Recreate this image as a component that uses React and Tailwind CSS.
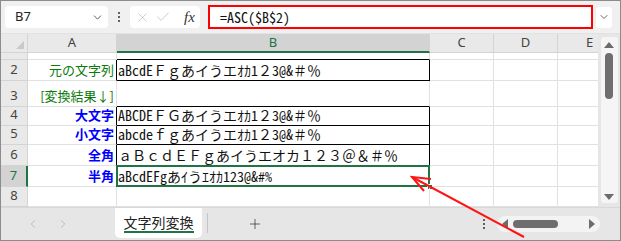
import React from 'react';
import { ChevronDown, X, Check, ChevronLeft, ChevronRight, Plus } from 'lucide-react';

const cellFont = "font-['Noto_Sans_Mono_CJK_JP','Noto_Sans_CJK_JP',monospace]";
const labelFont = "font-['Noto_Sans_CJK_JP',sans-serif]";
const uiFont = "font-['Noto_Sans','Noto_Sans_CJK_JP',sans-serif]";

const colHeads = ['A', 'B', 'C', 'D', 'E'];

const rows = [
  { n: '1', h: 'h-[7px]', topOfBox: true },
  { n: '2', a: '元の文字列', aCls: 'text-[#0b7a0b]', b: 'aBcdEＦｇあイうエｵｶ1２3@&＃％', boxed: true },
  { n: '3', a: '[変換結果↓]', aCls: 'text-[#0b7a0b]', topOfBox: true },
  { n: '4', a: '大文字', aCls: 'text-[#0000ff] font-bold', b: 'ABCDEＦＧあイうエｵｶ1２3@&＃％', boxed: true },
  { n: '5', a: '小文字', aCls: 'text-[#0000ff] font-bold', b: 'abcdeｆｇあイうエｵｶ1２3@&＃％', boxed: true },
  { n: '6', a: '全角', aCls: 'text-[#0000ff] font-bold', b: 'ａＢｃｄＥＦｇあイうエオカ１２３＠＆＃％', boxed: true },
  { n: '7', a: '半角', aCls: 'text-[#0000ff] font-bold', b: 'aBcdEFgあｲうｴｵｶ123@&#%', selected: true },
  { n: '8' },
];

function TopBar() {
  return (
    <div className="h-[33px] flex items-center bg-[#f0f0f0] border-b border-[#e2e2e2] pl-[4px] pr-[8px]">
      <div className={`w-[103px] h-[22px] bg-white rounded-[4px] flex items-center justify-between pl-[10px] pr-[4px] text-[13px] text-[#222] ${uiFont}`}>
        <span>B7</span>
        <ChevronDown size={13} strokeWidth={1.6} className="text-[#444]" />
      </div>
      <div className="w-[22px] flex flex-col items-center gap-[2px]">
        <span className="w-[2px] h-[2px] bg-[#333] rounded-full" />
        <span className="w-[2px] h-[2px] bg-[#333] rounded-full" />
        <span className="w-[2px] h-[2px] bg-[#333] rounded-full" />
      </div>
      <div className="w-[70px] h-[22px] bg-white rounded-[4px] flex items-center pl-[5px] gap-[5px]">
        <X size={15} strokeWidth={1.1} className="text-[#b8b8b8]" />
        <Check size={16} strokeWidth={1.1} className="text-[#b8b8b8]" />
        <span className="ml-[8px] text-[15px] italic text-[#333] font-['Liberation_Serif',serif] leading-none">fx</span>
      </div>
      <div className={`ml-[8px] w-[385px] h-[24px] bg-white border-2 border-[#ff0000] flex items-center pl-[10px] text-[14px] text-[#111] ${cellFont}`}>
        =ASC($B$2)
      </div>
      <div className="ml-[3px] w-[16px] h-[21px] bg-white rounded-[3px] flex items-center justify-center">
        <ChevronDown size={12} strokeWidth={1.6} className="text-[#444]" />
      </div>
    </div>
  );
}

function Grid() {
  return (
    <div className="w-[597px] overflow-hidden bg-white">
      <div className="grid w-max grid-cols-[27px_89px_313px_64px_64px_64px]">
        {/* header row */}
        <div className="h-[19px] bg-[#e9e9e9] border-r border-b border-[#d4d4d4] relative">
          <div className="absolute right-[3px] bottom-[3px] w-0 h-0 border-l-[8px] border-l-transparent border-b-[8px] border-b-[#c9c9c9]" />
        </div>
        {colHeads.map((c) => (
          <div
            key={c}
            className={`h-[19px] flex items-center justify-center text-[13px] ${uiFont} ${
              c === 'B'
                ? 'bg-[#d3d3d3] text-[#217346] border-b-2 border-[#217346] border-r border-r-[#d4d4d4]'
                : 'bg-[#e9e9e9] text-[#444] border-r border-b border-[#d4d4d4]'
            }`}
          >
            {c}
          </div>
        ))}

        {rows.map((r) => {
          const h = r.h || { '2': 'h-[21px]', '3': 'h-[26px]', '4': 'h-[19px]', '5': 'h-[19px]', '6': 'h-[21px]', '7': 'h-[21px]', '8': 'h-[20px]' }[r.n];
          return (
            <React.Fragment key={r.n}>
              <div
                className={`${h} overflow-hidden flex flex-col justify-end text-[13px] ${uiFont} border-b border-[#d4d4d4] ${
                  r.selected ? 'bg-[#d3d3d3] text-[#217346] border-r-2 border-r-[#217346]' : 'bg-[#e9e9e9] text-[#444] border-r'
                }`}
              >
                <div className="h-[20px] shrink-0 flex items-center justify-center">{r.n}</div>
              </div>
              <div
                className={`${h} overflow-hidden flex items-end justify-end pr-[2px] pb-[1px] whitespace-nowrap text-[13px] leading-[18px] ${labelFont} border-b border-[#e1e1e1] border-r ${
                  r.boxed ? 'border-r-black' : 'border-r-[#e1e1e1]'
                } ${r.aCls || ''}`}
              >
                {r.a}
              </div>
              <div
                className={`${h} relative flex items-end pl-[1px] pb-[1px] whitespace-nowrap text-[14px] leading-[18px] text-[#111] ${cellFont} border-r border-b ${
                  r.boxed ? 'border-black' : r.topOfBox ? 'border-r-[#e1e1e1] border-b-black' : 'border-[#e1e1e1]'
                }`}
              >
                {r.b}
                {r.selected && (
                  <>
                    <div className="absolute -left-[1px] -top-[1px] -right-[1px] -bottom-[1px] border-2 border-[#217346]" />
                    <div className="absolute -right-[4px] -bottom-[4px] w-[6px] h-[6px] bg-[#217346] border border-white" />
                  </>
                )}
              </div>
              <div className={`${h} border-r border-b border-[#e1e1e1]`} />
              <div className={`${h} border-r border-b border-[#e1e1e1]`} />
              <div className={`${h} border-r border-b border-[#e1e1e1]`} />
            </React.Fragment>
          );
        })}
      </div>
    </div>
  );
}

function VScroll() {
  return (
    <div className="w-[22px] bg-[#e6e6e6] flex justify-center pt-[3px]">
      <div className="w-[17px] h-[166px] bg-[#f5f5f5] rounded-[3px] flex flex-col items-center pt-[5px]">
        <div className="w-0 h-0 border-l-[5px] border-l-transparent border-r-[5px] border-r-transparent border-b-[6px] border-b-[#6b6b6b]" />
        <div className="mt-[5px] w-[8px] h-[46px] bg-[#6e6e6e] rounded-full" />
        <div className="mt-auto mb-[3px] w-0 h-0 border-l-[5px] border-l-transparent border-r-[5px] border-r-transparent border-t-[6px] border-t-[#6b6b6b]" />
      </div>
    </div>
  );
}

function TabBar() {
  return (
    <div className="h-[33px] bg-[#e6e6e6] border-t border-[#d8d8d8] flex items-start pr-[20px]">
      <div className="w-[114px] h-[31px] flex items-center pl-[25px] gap-[16px] text-[#b2b2b2]">
        <ChevronLeft size={14} strokeWidth={1.4} />
        <ChevronRight size={14} strokeWidth={1.4} />
      </div>
      <div className={`w-[87px] h-[30px] bg-white rounded-b-[5px] flex flex-col items-center justify-center text-[14px] text-[#222] ${labelFont}`}>
        <span className="leading-[18px] border-b-2 border-[#217346]">文字列変換</span>
      </div>
      <div className="ml-[5px] mt-[5px] w-px h-[20px] bg-[#c4c4c4]" />
      <div className="w-[94px] h-[31px] flex items-center justify-center text-[#333]">
        <Plus size={16} strokeWidth={1.1} />
      </div>
      <div className="flex-1" />
      <div className="h-[31px] flex flex-col justify-center items-center gap-[2px] w-[10px]">
        <span className="w-[2px] h-[2px] bg-[#333] rounded-full" />
        <span className="w-[2px] h-[2px] bg-[#333] rounded-full" />
        <span className="w-[2px] h-[2px] bg-[#333] rounded-full" />
      </div>
      <div className="ml-[8px] mt-[8px] w-[103px] h-[16px] bg-[#f3f3f3] rounded-full flex items-center px-[5px]">
        <div className="w-0 h-0 border-t-[5px] border-t-transparent border-b-[5px] border-b-transparent border-r-[6px] border-r-[#6b6b6b]" />
        <div className="ml-[5px] w-[45px] h-[8px] bg-[#6e6e6e] rounded-full" />
        <div className="ml-auto w-0 h-0 border-t-[5px] border-t-transparent border-b-[5px] border-b-transparent border-l-[6px] border-l-[#6b6b6b]" />
      </div>
    </div>
  );
}

export default function App() {
  return (
    <div className="relative w-[621px] h-[241px] overflow-hidden bg-[#e6e6e6] border border-[#8c8c8c]">
      <TopBar />
      <div className="flex">
        <Grid />
        <VScroll />
      </div>
      <TabBar />
      {/* red annotation arrow */}
      <svg className="absolute left-0 top-0 pointer-events-none" width="621" height="241" viewBox="0 0 621 241">
        <line x1="523" y1="236" x2="411" y2="176" stroke="#ff1414" strokeWidth="2" />
        <polyline points="430,178 411,176 423,190" fill="none" stroke="#ff1414" strokeWidth="2" />
      </svg>
    </div>
  );
}
